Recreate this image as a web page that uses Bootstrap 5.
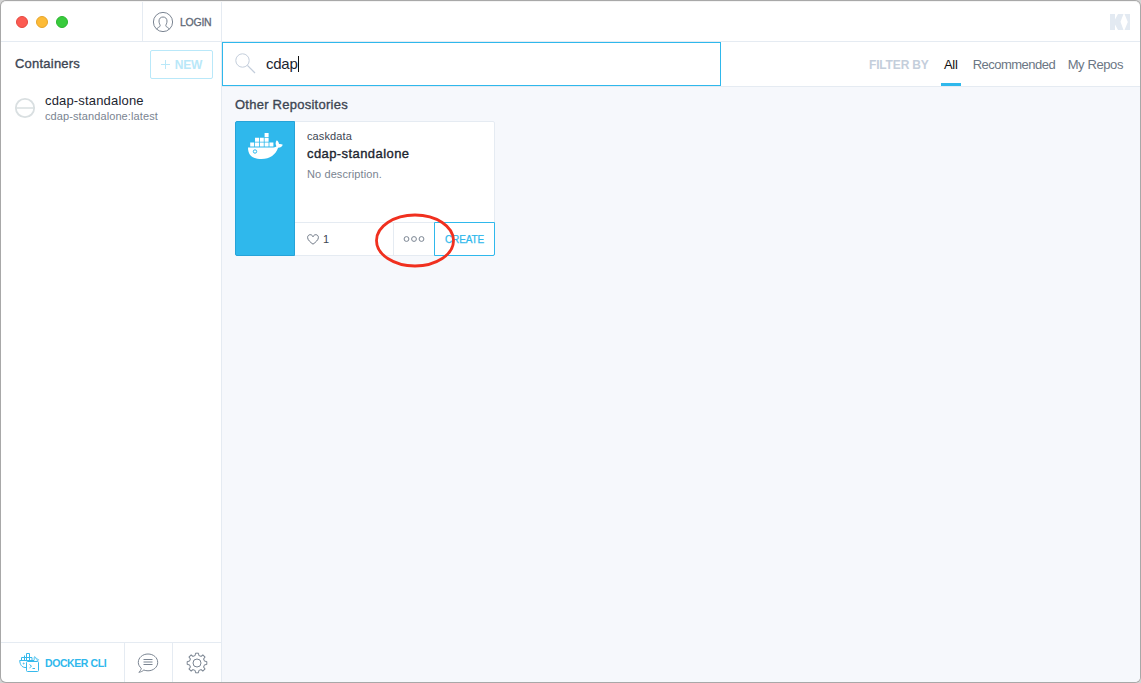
<!DOCTYPE html>
<html lang="en">
<head>
<meta charset="utf-8">
<title>Kitematic</title>
<link href="https://cdn.jsdelivr.net/npm/bootstrap@5.3.0/dist/css/bootstrap.min.css" rel="stylesheet">
<style>
:root{--line:#e5ebf2;--blue:#2fb8ec;--ink:#3d4653;--soft:#7a8491}
html,body{height:100%}
body{font-family:"Liberation Sans",Arial,sans-serif;font-size:13px;line-height:16px;color:var(--ink);background:#d4d4d4;padding:1px;overflow:hidden}
.window{height:681px;border-radius:5px;background:#fff;overflow:hidden;border-top:1px solid #f4f4f4;box-shadow:0 0 0 1px #a8a8a8}
.titlebar{height:40px;border-bottom:1px solid var(--line)}
.lights{width:141px;padding-left:15px;gap:8px}
.light{width:12px;height:12px;border-radius:50%}
.light-close{background:#fc5b52;border:1px solid #e5483f}
.light-min{background:#fdbb37;border:1px solid #e6a52a}
.light-max{background:#38cb3c;border:1px solid #2bb52f}
.login{width:80px;border-left:1px solid var(--line);border-right:1px solid var(--line);padding-left:9px;gap:6px;font-size:10.5px;color:#5f6978;-webkit-text-stroke:.3px;letter-spacing:-.25px}
.logo-k{margin-right:10px;margin-top:1px}
.sidebar{width:221px;border-right:1px solid var(--line)}
.medium{-webkit-text-stroke:.35px}
.side-head{padding:8px 8px 0 14px;height:44px}
.side-title{margin-top:6px;letter-spacing:.22px}
.btn-new{width:63px;height:29px;border:1px solid #b9e8f9;border-radius:2px;color:#b9e8f9;font-size:12px;font-weight:700;padding:0 1px 0 0;letter-spacing:-.1px}
.item{padding:7px 13px;gap:9px}
.item svg{margin-top:-2px}
.item-name{color:#1c2530;letter-spacing:.17px}
.item-tag{font-size:11px;line-height:15px;color:var(--soft);letter-spacing:.1px}
.foot{height:40px;border-top:1px solid var(--line)}
.cli{width:124px;border-right:1px solid var(--line);padding-left:18px;gap:5px;font-size:10.5px;font-weight:700;color:var(--blue);letter-spacing:-.42px}
.foot-chat{width:48px;border-right:1px solid var(--line);padding-right:1px}
.content-area{background:#f6f8fc}
.search-row{height:45px;border-bottom:1px solid var(--line);background:#fff}
.search{width:499px;height:44px;border:1px solid var(--blue);padding-left:12px;gap:10px;font-size:15px;color:#1c2530}
.search svg{margin-top:-2px}
.query{letter-spacing:-.25px}
.caret{width:1px;height:16px;background:#111}
.filters{padding-right:17px;color:#6b7684}
.filters>*{line-height:46px;height:44px;white-space:nowrap}
.filter-label{color:#c4cedb;font-size:12px;letter-spacing:-.15px}
.filter-on{color:#111;width:20px;border-bottom:3px solid var(--blue);margin:0 12px;letter-spacing:-.3px}
.filter-rec{margin-right:12.500px;letter-spacing:-.52px}
.filter-my{letter-spacing:-.4px}
.results{padding:10px 13px}
.results-title{letter-spacing:.25px}
.repo{width:260px;height:135px;margin-top:8px;border:1px solid var(--line);border-radius:2px;background:#fff}
.repo-mark{width:60px;margin:-1px 0 -1px -1px;background:var(--blue);border:1px solid #27a3d8;border-radius:2px 0 0 2px;padding:9px 11px}
.repo-info{padding:6px 12px;height:100px}
.repo-owner{font-size:11px;letter-spacing:.12px}
.repo-name{color:#1c2530;line-height:19px;letter-spacing:.42px}
.repo-desc{font-size:11px;line-height:22px;color:var(--soft);letter-spacing:.1px}
.repo-foot{height:33px;border-top:1px solid var(--line);font-size:11px}
.likes{width:98px;padding-left:11.500px;gap:4.500px}
.more{width:41px;border-left:1px solid var(--line)}
.create{width:61px;height:34px;margin:-1px -1px -1px 0;padding-top:2px;border:1px solid var(--blue);border-radius:0 0 2px 0;color:var(--blue);font-size:10px;letter-spacing:-.15px;-webkit-text-stroke:.25px}
.ring{position:absolute;left:137.500px;top:91px}
</style>
</head>
<body>
<div class="window d-flex flex-column">
  <header class="titlebar d-flex align-items-center flex-shrink-0">
    <div class="lights d-flex">
      <span class="light light-close"></span>
      <span class="light light-min"></span>
      <span class="light light-max"></span>
    </div>
    <div class="login d-flex align-items-center h-100">
      <svg width="22" height="22" viewBox="0 0 22 22" fill="none" stroke="#7b8592"><circle cx="11" cy="11" r="9.6"/><path d="M4.600 18.200c.6-1.900 3.600-2 3.600-3.500 0-1.100-1.200-2.100-1.200-4.700C7 7.500 8.700 6 11 6s4 1.500 4 4c0 2.600-1.200 3.600-1.200 4.700 0 1.500 3 1.600 3.600 3.500"/></svg>
      <span>LOGIN</span>
    </div>
    <svg class="logo-k ms-auto" width="20" height="16" viewBox="0 0 20 16" fill="#e3eaf2"><path d="M0 0h5v5.500L8 0h5.500L10.500 7.800 13.500 16H8L5 10.500V16H0zM14.500 0H20v16h-5.500L17.800 8z"/></svg>
  </header>
  <div class="d-flex flex-grow-1">
    <aside class="sidebar d-flex flex-column">
      <div class="side-head d-flex justify-content-between">
        <span class="medium side-title">Containers</span>
        <button class="btn btn-new d-flex align-items-center justify-content-center gap-1"><svg width="11" height="11" viewBox="0 0 11 11" stroke="#b9e8f9"><path d="M1 5.500h9M5.500 1v9"/></svg><span>NEW</span></button>
      </div>
      <div class="item d-flex align-items-center">
        <svg width="22" height="22" viewBox="0 0 22 22" fill="none" stroke="#d9dfe1" stroke-width="1.800"><circle cx="11" cy="11" r="9.200"/><path d="M2 11h18" stroke-width="1.500"/></svg>
        <div><div class="item-name">cdap-standalone</div><div class="item-tag">cdap-standalone:latest</div></div>
      </div>
      <footer class="foot d-flex mt-auto">
        <div class="cli d-flex align-items-center">
          <svg width="21" height="21" viewBox="0 0 21 21" fill="none" stroke="#36b9ec"><path d="M7.500 15.500H6C2.800 15.200 1 12.600.7 8.500h14.300c.5-1.100-.2-2.600.6-3.800 1.200.6 1.500 1.500 1.600 2.300 1 0 1.700.2 2.300.7-.6 1.300-1.700 1.700-3 1.700M2.500 8.500v-3h10.500v3M5.500 8.500v-5M7.500 5.500v-4h3v7M7.500 5.500v3"/><rect x="7.500" y="9.500" width="12" height="10" rx="1" fill="#fff"/><path d="m10.500 12.500 2 1.700-2 1.700M13.500 16.500h2.500"/><circle cx="4.700" cy="11.500" r=".5"/></svg>
          <span>DOCKER CLI</span>
        </div>
        <div class="foot-chat d-flex align-items-center justify-content-center"><svg width="22" height="22" viewBox="0 0 22 22" fill="none" stroke="#7b8592"><path d="M4.300 16.200C2.500 14.700 1.300 12.700 1.300 10.400 1.300 5.700 5.600 2 11 2s9.700 3.700 9.700 8.400-4.300 8.400-9.700 8.400c-1.500 0-2.900-.3-4.200-.8-1.300 1.300-3 2-5 2.300 1.300-1.100 2.200-2.400 2.500-4.100z"/><path d="M6.500 7.500h9M6.500 10h9M6.500 12.500h9"/></svg></div>
        <div class="flex-grow-1 d-flex align-items-center justify-content-center"><svg width="22" height="22" viewBox="-11 -11 22 22" fill="none" stroke="#7b8592"><defs><path id="tooth" d="M-2.950-7.110-1.800-7.500-1.500-9.800H1.500L1.800-7.500 2.950-7.110"/></defs><use href="#tooth"/><use href="#tooth" transform="rotate(45)"/><use href="#tooth" transform="rotate(90)"/><use href="#tooth" transform="rotate(135)"/><use href="#tooth" transform="rotate(180)"/><use href="#tooth" transform="rotate(225)"/><use href="#tooth" transform="rotate(270)"/><use href="#tooth" transform="rotate(315)"/><circle r="4"/></svg></div>
      </footer>
    </aside>
    <main class="content-area flex-grow-1">
      <div class="search-row d-flex justify-content-between">
        <div class="search d-flex align-items-center">
          <svg width="21" height="21" viewBox="0 0 21 21" fill="none" stroke="#c3cddb"><circle cx="7.500" cy="7.500" r="6.700"/><path d="m12.400 12.400 7.600 7.600" stroke-width="1.300"/></svg>
          <span class="d-flex align-items-center"><span class="query">cdap</span><span class="caret"></span></span>
        </div>
        <nav class="filters d-flex">
          <span class="filter-label fw-bold">FILTER BY</span>
          <span class="filter-on text-center">All</span>
          <span class="filter-rec">Recommended</span>
          <span class="filter-my">My Repos</span>
        </nav>
      </div>
      <section class="results">
        <div class="medium results-title">Other Repositories</div>
        <article class="repo d-flex position-relative">
          <div class="repo-mark"><svg width="38" height="30" viewBox="0 0 38 30" fill="#fff"><path d="M1 16.500h25.500c1.500 0 2.400-.6 2.900-1.200-1.200-1.900-1-4.200.4-6 1.400 1 2.100 2.200 2.200 3.700 1.400-.2 2.700 0 3.800.7-.8 2-2.300 2.900-4.700 3C28.700 23.500 23 28 14.500 28 5.500 28 1 24.500 1 16.500z"/><path d="M3.200 11.500h4v4h-4zM8 11.500h4v4H8zM12.800 11.500h4v4h-4zM17.600 11.500h4v4h-4zM22.400 11.500h4v4h-4zM8 6.800h4v4H8zM12.800 6.800h4v4h-4zM17.600 6.800h4v4h-4zM17.600 2h4v4h-4z"/><circle cx="8" cy="20.500" r="1.700" fill="none" stroke="#2fb8ec"/></svg></div>
          <div class="flex-grow-1">
            <div class="repo-info"><div class="repo-owner">caskdata</div><div class="medium repo-name">cdap-standalone</div><div class="repo-desc">No description.</div></div>
            <div class="repo-foot d-flex">
              <div class="likes d-flex align-items-center"><svg width="12" height="11" viewBox="0 0 12 11" fill="none" stroke="#5f6978" stroke-width=".9"><path d="M6 10.200C3.500 8.300.6 6 .6 3.500.6 1.800 1.800.7 3.200.7 4.500.7 5.500 1.500 6 2.700 6.500 1.500 7.500.7 8.800.7c1.400 0 2.600 1.100 2.600 2.800C11.400 6 8.500 8.300 6 10.200z"/></svg><span>1</span></div>
              <div class="more d-flex align-items-center justify-content-center"><svg width="22" height="8" viewBox="0 0 22 8" fill="none" stroke="#7b8592"><circle cx="3.500" cy="4" r="2.400"/><circle cx="11" cy="4" r="2.400"/><circle cx="18.500" cy="4" r="2.400"/></svg></div>
              <div class="create d-flex align-items-center justify-content-center"><span>CREATE</span></div>
            </div>
          </div>
          <svg class="ring" width="82" height="56" viewBox="0 0 82 56" fill="none" stroke="#f0301f" stroke-width="2.800"><ellipse cx="41" cy="27.500" rx="38.500" ry="25.500"/></svg>
        </article>
      </section>
    </main>
  </div>
</div>
<script src="https://cdn.jsdelivr.net/npm/bootstrap@5.3.0/dist/js/bootstrap.bundle.min.js"></script>
</body>
</html>
